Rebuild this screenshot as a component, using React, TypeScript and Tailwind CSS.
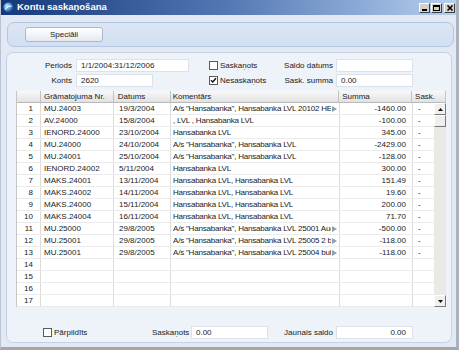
import React from "react";

type Row = {
  nr: string;
  date: string;
  comment: string;
  sum: string;
  cut?: boolean;
};

const rows: Row[] = [
  { nr: "MU.24003", date: "19/3/2004", comment: 'A/s "Hansabanka", Hansabanka LVL 20102 HEBE maksājums', sum: "-1460.00", cut: true },
  { nr: "AV.24000", date: "15/8/2004", comment: ", LVL , Hansabanka LVL", sum: "-100.00" },
  { nr: "IENORD.24000", date: "23/10/2004", comment: "Hansabanka LVL", sum: "345.00" },
  { nr: "MU.24000", date: "24/10/2004", comment: 'A/s "Hansabanka", Hansabanka LVL', sum: "-2429.00" },
  { nr: "MU.24001", date: "25/10/2004", comment: 'A/s "Hansabanka", Hansabanka LVL', sum: "-128.00" },
  { nr: "IENORD.24002", date: "5/11/2004", comment: "Hansabanka LVL", sum: "300.00" },
  { nr: "MAKS.24001", date: "13/11/2004", comment: "Hansabanka LVL, Hansabanka LVL", sum: "151.49" },
  { nr: "MAKS.24002", date: "14/11/2004", comment: "Hansabanka LVL, Hansabanka LVL", sum: "19.60" },
  { nr: "MAKS.24000", date: "15/11/2004", comment: "Hansabanka LVL, Hansabanka LVL", sum: "200.00" },
  { nr: "MAKS.24004", date: "16/11/2004", comment: "Hansabanka LVL, Hansabanka LVL", sum: "71.70" },
  { nr: "MU.25000", date: "29/8/2005", comment: 'A/s "Hansabanka", Hansabanka LVL 25001 Augusts', sum: "-500.00", cut: true },
  { nr: "MU.25001", date: "29/8/2005", comment: 'A/s "Hansabanka", Hansabanka LVL 25005 2 bankas', sum: "-118.00", cut: true },
  { nr: "MU.25001", date: "29/8/2005", comment: 'A/s "Hansabanka", Hansabanka LVL 25004 bulta', sum: "-118.00", cut: true },
];

const emptyRows = [14, 15, 16, 17];

function Checkbox({ checked = false }: { checked?: boolean }) {
  return (
    <span className="w-[9px] h-[9px] shrink-0 bg-white border border-[#5a5a5a] flex items-center justify-center">
      {checked && (
        <svg width="7" height="7" viewBox="0 0 7 7">
          <path d="M1 3.2 L2.8 5 L6 1.2" stroke="#111" strokeWidth="1.4" fill="none" />
        </svg>
      )}
    </span>
  );
}

function Field({ value = "", width, right = false }: { value?: string; width: string; right?: boolean }) {
  return (
    <div
      className={`${width} h-[13px] bg-white border border-[#dbe2ec] px-[4px] leading-[11px] ${
        right ? "text-right pr-[6px]" : ""
      }`}
    >
      {value}
    </div>
  );
}

function ScrollButton({ dir }: { dir?: "up" | "down" }) {
  return (
    <div className="h-[12px] w-[12px] bg-[#efefef] border border-t-white border-l-white border-r-[#7a7a7a] border-b-[#7a7a7a] flex items-center justify-center">
      {dir === "up" && (
        <svg width="5" height="3" viewBox="0 0 5 3">
          <path d="M0 3 L2.5 0 L5 3 Z" fill="#111" />
        </svg>
      )}
      {dir === "down" && (
        <svg width="5" height="3" viewBox="0 0 5 3">
          <path d="M0 0 L2.5 3 L5 0 Z" fill="#111" />
        </svg>
      )}
    </div>
  );
}

function TitleButton({ kind }: { kind: "min" | "max" | "close" }) {
  return (
    <div className="w-[11px] h-[10px] bg-[#d4d0c8] border border-t-white border-l-white border-r-[#404040] border-b-[#404040] flex items-center justify-center">
      {kind === "min" && <div className="w-[5px] h-[2px] bg-black mt-[4px] mr-[1px]" />}
      {kind === "max" && <div className="w-[7px] h-[6px] border border-black border-t-2" />}
      {kind === "close" && (
        <svg width="6" height="6" viewBox="0 0 6 6">
          <path d="M0.5 0.5 L5.5 5.5 M5.5 0.5 L0.5 5.5" stroke="#000" strokeWidth="1.5" />
        </svg>
      )}
    </div>
  );
}

export default function App() {
  return (
    <div className="w-[459px] h-[350px] flex flex-col bg-[#e2e9f4] border-l border-[#b9c3d1] border-r-[3px] border-r-[#aab2bd] border-b-[3px] border-b-[#a6a6a6] font-['Liberation_Sans',Arial,sans-serif] text-[8px] text-[#1a1a1a] overflow-hidden">
      {/* Title bar */}
      <div className="h-[15px] shrink-0 flex items-center bg-linear-to-r from-[#15387a] via-[#5478b4] to-[#b7d0ef] pl-[2px] pr-[1px]">
        <svg width="11" height="11" viewBox="0 0 11 11" className="shrink-0">
          <defs>
            <radialGradient id="ball" cx="0.35" cy="0.35" r="0.7">
              <stop offset="0" stopColor="#cfe6ff" />
              <stop offset="0.6" stopColor="#3a8ad8" />
              <stop offset="1" stopColor="#0d3f86" />
            </radialGradient>
          </defs>
          <circle cx="5.5" cy="5.5" r="5" fill="url(#ball)" />
          <path d="M2.5 7.5 C4 4 7 3.5 8.5 4.5" stroke="#fff" strokeWidth="1.1" fill="none" />
        </svg>
        <span className="ml-[3px] text-white font-bold text-[9.5px]">Kontu saskaņošana</span>
        <div className="ml-auto flex items-center">
          <TitleButton kind="min" />
          <div className="ml-[1px]">
            <TitleButton kind="max" />
          </div>
          <div className="ml-[2px]">
            <TitleButton kind="close" />
          </div>
        </div>
      </div>

      <div className="flex-1 flex flex-col pl-[5px] pr-[2px] pt-[7px]">
        {/* Toolbar */}
        <div className="h-[25px] ml-[1px] shrink-0 rounded-[7px] border border-[#b4c7e1] bg-linear-to-b from-[#dbe6f5] to-[#d1dff1] pl-[17px] pt-[4px]">
          <div className="w-[78px] h-[15px] rounded-[3px] border border-[#a9b8cc] bg-linear-to-b from-white to-[#e4e9f0] flex items-center justify-center">
            Speciāli
          </div>
        </div>

        {/* Main panel */}
        <div className="mt-[5px] h-[291px] mr-[2px] rounded-[7px] border border-[#c4d2e6] bg-[#eef2f9] flex flex-col">
          <div className="pt-[6px] flex flex-col gap-[2px]">
            <div className="flex items-center h-[13px]">
              <div className="w-[65px] text-right">Periods</div>
              <div className="ml-[4px] w-[113px]">
                <Field value="1/1/2004:31/12/2006" width="w-[113px]" />
              </div>
              <div className="ml-[20px] w-[74px] flex items-center gap-[2px]">
                <Checkbox />
                <span>Saskaņots</span>
              </div>
              <div className="w-[50px] text-right">Saldo datums</div>
              <div className="ml-[3px]">
                <Field width="w-[77px]" />
              </div>
            </div>
            <div className="flex items-center h-[13px]">
              <div className="w-[65px] text-right">Konts</div>
              <div className="ml-[4px] w-[113px]">
                <Field value="2620" width="w-[77px]" />
              </div>
              <div className="ml-[20px] w-[74px] flex items-center gap-[2px]">
                <Checkbox checked />
                <span>Nesaskaņots</span>
              </div>
              <div className="w-[50px] text-right">Sask. summa</div>
              <div className="ml-[3px]">
                <Field value="0.00" width="w-[77px]" />
              </div>
            </div>
          </div>

          {/* Grid */}
          <div className="ml-[9px] mt-[4px] w-[430px] h-[216px] flex flex-col border-l border-[#c6c6c6]">
            <div className="h-[12px] flex leading-[11px] bg-linear-to-b from-[#f8f8f8] to-[#e2e2e2] border-b border-[#b9b9b9]">
              <div className="w-[24px] border-r border-[#c2c2c2]" />
              <div className="w-[73px] border-r border-[#c2c2c2] pl-[3px]">Grāmatojuma Nr.</div>
              <div className="w-[57px] border-r border-[#c2c2c2] pl-[4px]">Datums</div>
              <div className="w-[169px] border-r border-[#c2c2c2] pl-[2px]">Komentārs</div>
              <div className="w-[73px] border-r border-[#c2c2c2] pl-[3px]">Summa</div>
              <div className="w-[34px] border-r border-[#c2c2c2] pl-[3px]">Sask.</div>
            </div>
            <div className="flex flex-1">
              <div className="w-[417px] bg-white flex flex-col">
                {rows.map((r, i) => (
                  <div key={i} className="h-[12px] flex leading-[11px] border-b border-[#ebebeb]">
                    <div className="w-[24px] border-r border-[#dcdcdc] text-right pr-[7px]">{i + 1}</div>
                    <div className="w-[73px] border-r border-[#dcdcdc] pl-[3px]">{r.nr}</div>
                    <div className="w-[57px] border-r border-[#dcdcdc] pl-[5px]">{r.date}</div>
                    <div className="w-[169px] border-r border-[#dcdcdc] pl-[2px] relative">
                      <div
                        className={`overflow-hidden whitespace-nowrap tracking-[-0.2px] ${r.cut ? "w-[158px]" : ""}`}
                      >
                        {r.comment}
                      </div>
                      {r.cut && (
                        <svg width="5" height="6" viewBox="0 0 5 6" className="absolute right-[2px] top-[3px]">
                          <path d="M0 0 L5 3 L0 6 Z" fill="#8aa0b6" />
                        </svg>
                      )}
                    </div>
                    <div className="w-[73px] border-r border-[#dcdcdc] text-right pr-[6px]">{r.sum}</div>
                    <div className="w-[21px] pl-[5px]">-</div>
                  </div>
                ))}
                {emptyRows.map((n) => (
                  <div key={n} className="h-[12px] flex leading-[11px] border-b border-[#ebebeb]">
                    <div className="w-[24px] border-r border-[#dcdcdc] text-right pr-[7px]">{n}</div>
                    <div className="w-[73px] border-r border-[#dcdcdc]" />
                    <div className="w-[57px] border-r border-[#dcdcdc]" />
                    <div className="w-[169px] border-r border-[#dcdcdc]" />
                    <div className="w-[73px] border-r border-[#dcdcdc]" />
                    <div className="w-[21px]" />
                  </div>
                ))}
              </div>
              <div className="w-[12px] bg-[#e9e9e6] flex flex-col">
                <ScrollButton dir="up" />
                <ScrollButton />
                <div className="flex-1" />
                <ScrollButton dir="down" />
              </div>
            </div>
          </div>

          {/* Footer */}
          <div className="mt-[19px] flex items-center h-[13px]">
            <div className="ml-[36px] w-[109px] flex items-center gap-[2px]">
              <Checkbox />
              <span>Pārpildīts</span>
            </div>
            <div className="w-[36px] text-right">Saskaņots</div>
            <div className="ml-[3px]">
              <Field value="0.00" width="w-[77px]" />
            </div>
            <div className="w-[65px] text-right">Jaunais saldo</div>
            <div className="ml-[3px]">
              <Field value="0.00" width="w-[77px]" right />
            </div>
          </div>
        </div>
      </div>
    </div>
  );
}
